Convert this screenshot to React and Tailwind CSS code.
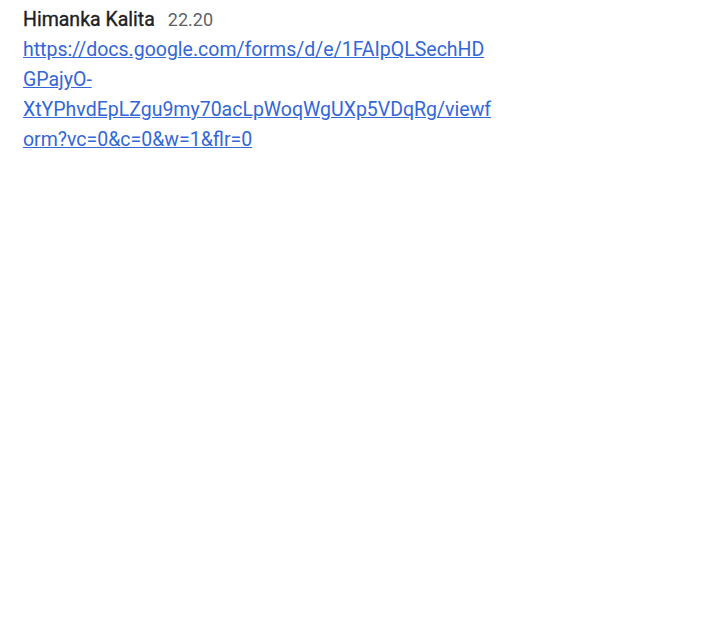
export default function App() {
  return (
    <div className="min-h-screen bg-white font-['Roboto',sans-serif]">
      <div className="pl-[23px] pt-[5px]">
        <div className="flex items-baseline gap-[13px] leading-[30px]">
          <span className="text-[19.5px] font-normal text-[#202124] [-webkit-text-stroke:0.35px_#202124]">
            Himanka Kalita
          </span>
          <span className="text-[18px] text-[#5f6368]">22.20</span>
        </div>
        <a
          href="#"
          className="block text-[19.5px] leading-[30px] text-[#3367d6] underline"
        >
          https://docs.google.com/forms/d/e/1FAIpQLSechHD
          <br />
          GPajyO-
          <br />
          XtYPhvdEpLZgu9my70acLpWoqWgUXp5VDqRg/viewf
          <br />
          orm?vc=0&amp;c=0&amp;w=1&amp;flr=0
        </a>
      </div>
    </div>
  );
}
